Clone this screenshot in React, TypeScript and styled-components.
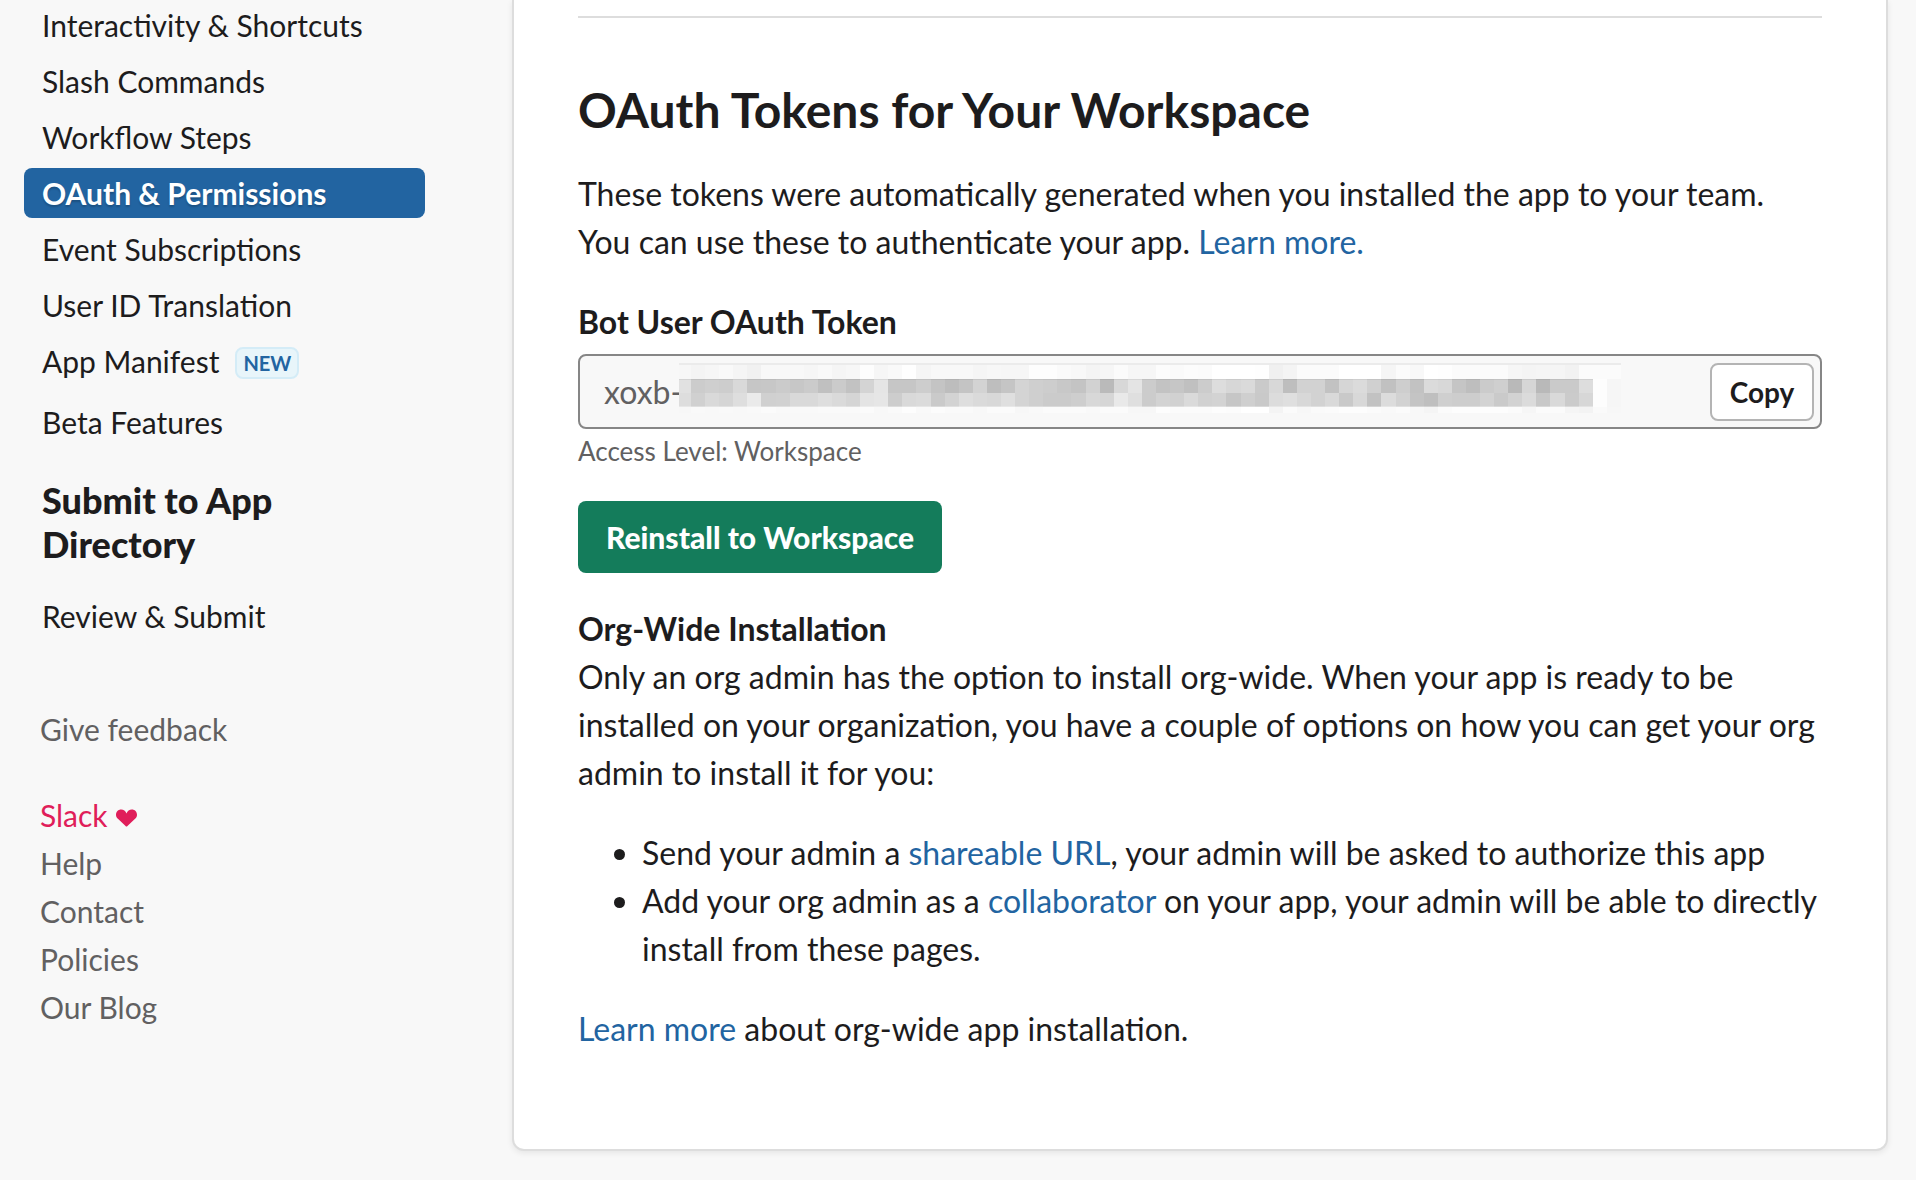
import React from "react";
import styled, { createGlobalStyle, css } from "styled-components";

const GlobalStyle = createGlobalStyle`
  *, *::before, *::after { box-sizing: border-box; }
  body {
    margin: 0;
    background: #f8f8f8;
    color: #1d1c1d;
    font-family: Lato, "Open Sans", sans-serif;
    font-size: 32px;
    line-height: 48px;
  }
`;

const Page = styled.div`
  display: flex;
  align-items: flex-start;
  padding: 0 28px 28px 24px;
`;

const Sidebar = styled.aside`
  flex: 0 0 401px;
  margin-right: 87px;
`;

const NavList = styled.ul`
  display: grid;
  gap: 6px;
  margin: 0;
  padding: 0;
  list-style: none;
`;

const NavLink = styled.a<{ $active?: boolean }>`
  display: flex;
  align-items: flex-start;
  gap: 16px;
  padding: 0 18px;
  border-radius: 8px;
  color: inherit;
  font-size: 30px;
  line-height: 50px;
  text-decoration: none;
  ${(p) =>
    p.$active &&
    css`
      background: #2264a1;
      color: #fff;
      font-weight: 700;
      text-shadow: 0 2px 2px rgba(0, 0, 0, 0.2);
    `}
`;

const Badge = styled.span`
  margin: 11px 0 12px;
  padding: 0 6px;
  border: 2px solid #d4ecf7;
  border-radius: 8px;
  background: #e8f5fa;
  color: #2264a1;
  font-size: 20px;
  font-weight: 700;
  line-height: 28px;
`;

const NavHeading = styled.h3`
  margin: 31px 0 25px;
  padding: 0 18px;
  font-family: "Lato Black", Lato, "Open Sans", sans-serif;
  font-size: 36px;
  font-weight: 900;
  line-height: 44px;
`;

const FooterLinks = styled.ul`
  margin: 64px 0 0;
  padding: 0 16px;
  list-style: none;
  font-size: 30px;

  & + & {
    margin-top: 38px;
  }
`;

const FooterLink = styled.a<{ $brand?: boolean }>`
  display: inline-flex;
  align-items: baseline;
  gap: 8px;
  color: ${(p) => (p.$brand ? "#e01e5a" : "#616061")};
  text-decoration: none;
`;

const Card = styled.main`
  flex: 1;
  min-width: 0;
  padding: 16px 64px 96px;
  border: solid #dddddd;
  border-width: 0 2px 2px;
  border-radius: 0 0 12px 12px;
  background: #fff;
  box-shadow: 0 2px 6px rgba(0, 0, 0, 0.08);
`;

const Divider = styled.hr`
  margin: 0 0 62px;
  border: 0;
  border-top: 2px solid #dddddd;
`;

const Title = styled.h2`
  margin: 0 0 30px;
  font-size: 48px;
  font-weight: 700;
  line-height: 60px;
`;

const Text = styled.p`
  margin: 0;
`;

const Link = styled.a`
  color: #2264a1;
  text-decoration: none;
`;

const FieldLabel = styled.label`
  display: block;
  margin: 32px 0 8px;
  font-weight: 700;
`;

const TokenField = styled.div`
  display: flex;
  align-items: center;
  height: 75px;
  padding: 0 6px 0 24px;
  border: 2px solid #868686;
  border-radius: 8px;
  background: #f8f8f8;
`;

const TokenInput = styled.input`
  flex: none;
  width: 75px;
  padding: 0;
  border: 0;
  outline: 0;
  background: transparent;
  color: #616061;
  font: inherit;
`;

const Mosaic = styled.svg`
  flex: 0 1 942px;
  min-width: 0;
  height: 57px;
`;

const CopyButton = styled.button`
  flex: none;
  width: 104px;
  height: 58px;
  margin-left: auto;
  padding: 0;
  border: 2px solid #b4b4b4;
  border-radius: 8px;
  background: #fff;
  color: #1d1c1d;
  font: inherit;
  font-size: 28px;
  font-weight: 700;
`;

const Hint = styled.p`
  margin: 2px 0 30px;
  color: #616061;
  font-size: 26px;
  line-height: 40px;
`;

const PrimaryButton = styled.button`
  display: block;
  height: 72px;
  padding: 0 28px;
  border: 0;
  border-radius: 8px;
  background: #147c5b;
  color: #fff;
  font-family: "Lato Black", Lato, "Open Sans", sans-serif;
  font-size: 30px;
  font-weight: 900;
`;

const SectionTitle = styled.h3`
  margin: 32px 0 0;
  font-size: 32px;
  font-weight: 700;
`;

const Bullets = styled.ul`
  margin: 32px 0;
  padding-left: 64px;
`;

/* Grey levels of the redaction blocks, two hex digits per block. */
const ROWS = [
  { y: 2, h: 14, v: "f7f4f6f9f5f1f8f8f8f6f9f5f7fdf6f9fef5f8f8f8f5f7f6f6fdfdfaf8f4f6fbf6f6fcfafcfbfffffffef0f4fbfbfbfffffff5fbf8fffefbfbfbfbf6f4f5f5f2fbfbfb" },
  { y: 16, h: 14, v: "e1cccfcdd9c6c7cbc7cbc0cbc2d4e5c6c6cdc4bdc4d3bec5d4cfcdc8c4d2bad8e4ccc3c6c0ccddd7dacad8bed2d2c2d6dbd0c1cec2dbd8c5becbcfb9d6b9cacaddfdf6" },
  { y: 30, h: 14, v: "ddd0d9d5deead0d1d9d9dedad5e4e6cdd9dbcad3dedad8dfd4cfcbcbced8d6e9dfccd3d1dad1d3c6cfc9dcdfd8d2d9c9d8c2dcd2c4bfcfcdcdd3cad2dbc8d9cbd7fdf6" },
  { y: 44, h: 6, v: "f7f9f8f9f8f9fbf9f9f9fafafafbf8fafdf9fcfafaf8fbfbf7f9fbfbfbf9fbfbf7f7fdfbfbfbfdfcfffff4fbf7fafbfdfdfbf9fbf8f5fbfdfdfdfdfbf6fbfbf5f3faf7" },
];

function RedactedToken() {
  const left = (i: number) => (i === 0 ? 0 : Math.round(12 + (i - 1) * 14.09));
  return (
    <Mosaic viewBox="0 0 942 57" preserveAspectRatio="xMinYMid slice" shapeRendering="crispEdges" aria-hidden="true">
      {ROWS.map((row) =>
        (row.v.match(/../g) ?? []).map((g, i) => (
          <rect key={`${row.y}-${i}`} x={left(i)} y={row.y} width={left(i + 1) - left(i)} height={row.h} fill={`#${g}${g}${g}`} />
        ))
      )}
      <rect x="0" y="0" width="942" height="2" fill="#ebebeb" />
      <rect x="0" y="16" width="914" height="1" fill="#000" opacity="0.06" />
      <rect x="0" y="43" width="914" height="1" fill="#fff" opacity="0.3" />
    </Mosaic>
  );
}

function Heart() {
  return (
    <svg width="21" height="18" viewBox="0 0 22 18" fill="currentColor" aria-hidden="true">
      <path d="M11 18C10.500 18 10 17.300 9.200 16.500L2 9.800C.7 8.500 0 7.300 0 5.500 0 2.300 2.300 0 5.400 0 8 0 10 1.500 11 4.200 12 1.500 14 0 16.600 0 19.700 0 22 2.300 22 5.500 22 7.300 21.300 8.500 20 9.800L12.800 16.500C12 17.300 11.500 18 11 18Z" />
    </svg>
  );
}

const NAV = [
  { label: "Interactivity & Shortcuts" },
  { label: "Slash Commands" },
  { label: "Workflow Steps" },
  { label: "OAuth & Permissions", active: true },
  { label: "Event Subscriptions" },
  { label: "User ID Translation" },
  { label: "App Manifest", badge: "NEW" },
  { label: "Beta Features" },
];

export default function App() {
  return (
    <>
      <GlobalStyle />
      <Page>
        <Sidebar>
          <nav>
            <NavList>
              {NAV.map((item) => (
                <li key={item.label}>
                  <NavLink href="#" $active={item.active} aria-current={item.active ? "page" : undefined}>
                    {item.label}
                    {item.badge && <Badge>{item.badge}</Badge>}
                  </NavLink>
                </li>
              ))}
            </NavList>
            <NavHeading>Submit to App Directory</NavHeading>
            <NavList>
              <li>
                <NavLink href="#">Review &amp; Submit</NavLink>
              </li>
            </NavList>
          </nav>
          <FooterLinks>
            <li>
              <FooterLink href="#">Give feedback</FooterLink>
            </li>
          </FooterLinks>
          <FooterLinks>
            <li>
              <FooterLink href="#" $brand>
                Slack <Heart />
              </FooterLink>
            </li>
            {["Help", "Contact", "Policies", "Our Blog"].map((label) => (
              <li key={label}>
                <FooterLink href="#">{label}</FooterLink>
              </li>
            ))}
          </FooterLinks>
        </Sidebar>

        <Card>
          <Divider />
          <Title>OAuth Tokens for Your Workspace</Title>
          <Text>
            These tokens were automatically generated when you installed the app to your team. You can use these to
            authenticate your app. <Link href="#">Learn more.</Link>
          </Text>

          <FieldLabel htmlFor="bot-token">Bot User OAuth Token</FieldLabel>
          <TokenField>
            <TokenInput id="bot-token" value="xoxb-" readOnly />
            <RedactedToken />
            <CopyButton type="button">Copy</CopyButton>
          </TokenField>
          <Hint>Access Level: Workspace</Hint>

          <PrimaryButton type="button">Reinstall to Workspace</PrimaryButton>

          <SectionTitle>Org-Wide Installation</SectionTitle>
          <Text>
            Only an org admin has the option to install org-wide. When your app is ready to be installed on your
            organization, you have a couple of options on how you can get your org admin to install it for you:
          </Text>
          <Bullets>
            <li>
              Send your admin a <Link href="#">shareable URL</Link>, your admin will be asked to authorize this app
            </li>
            <li>
              Add your org admin as a <Link href="#">collaborator</Link> on your app, your admin will be able to
              directly install from these pages.
            </li>
          </Bullets>
          <Text>
            <Link href="#">Learn more</Link> about org-wide app installation.
          </Text>
        </Card>
      </Page>
    </>
  );
}
